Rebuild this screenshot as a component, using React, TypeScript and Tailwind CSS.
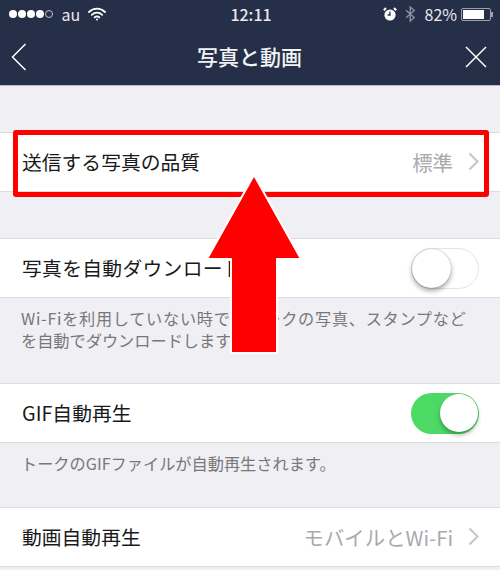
function Toggle({ on }: { on: boolean }) {
  if (on) {
    return (
      <div className="flex h-[41px] w-[68px] items-center justify-end rounded-full bg-[#4cd964] pr-[1px]">
        <div className="h-[38px] w-[38px] rounded-full bg-white shadow-[0_3px_4px_rgba(0,0,0,0.3)]" />
      </div>
    );
  }
  return (
    <div className="flex h-[41px] w-[68px] items-center rounded-full border border-[#e5e5e5] bg-white">
      <div className="h-[39px] w-[39px] rounded-full bg-white shadow-[0_3px_5px_rgba(0,0,0,0.35),0_0_1px_rgba(0,0,0,0.4)]" />
    </div>
  );
}

function Row({ label, value, toggle, labelClass = "" }: { label: string; value?: string; toggle?: boolean; labelClass?: string }) {
  return (
    <div className="flex h-[60px] items-center justify-between border-y border-[#dcdce0] bg-white pl-[22px] pr-[21px]">
      <span className={`text-[19.8px] text-[#1a1a1a] ${labelClass}`}>{label}</span>
      {toggle === undefined ? (
        <div className="flex items-center gap-[15px] text-[#a9a9ae]">
          <span className="text-[20.4px]">{value}</span>
          <svg width="11" height="19" viewBox="0 0 11 19" fill="none" stroke="#c7c7cc" strokeWidth="2.2">
            <path d="M1.5 1.5 L9.5 9.5 L1.5 17.5" />
          </svg>
        </div>
      ) : (
        <Toggle on={toggle} />
      )}
    </div>
  );
}

function StatusBar() {
  return (
    <div className="flex h-[28px] items-center justify-between pl-[9px] pr-[7px] text-[16px] text-[#e8eaf0]">
      <div className="flex w-[150px] items-center">
        <div className="flex items-center gap-[1.5px]">
          {[0, 1, 2, 3].map((i) => (
            <span key={i} className="h-[7.5px] w-[7.5px] rounded-full bg-white" />
          ))}
          <span className="h-[7.5px] w-[7.5px] rounded-full border border-white/70" />
        </div>
        <span className="ml-[9px]">au</span>
        <svg width="18" height="14" viewBox="0 0 18 14" className="ml-[8px]" fill="none" stroke="white" strokeLinecap="round">
          <path d="M1 5 C5.5 0.6 12.5 0.6 17 5" strokeWidth="1.8" />
          <path d="M3.8 7.8 C6.8 5 11.2 5 14.2 7.8" strokeWidth="1.8" />
          <path d="M6.6 10.4 C8 9.2 10 9.2 11.4 10.4" strokeWidth="1.8" />
          <circle cx="9" cy="12.4" r="1" fill="white" stroke="none" />
        </svg>
      </div>
      <span className="text-[16px] font-medium">12:11</span>
      <div className="flex w-[150px] items-center justify-end">
        <svg width="14" height="14" viewBox="0 0 14 14" className="mr-[8px]">
          <circle cx="7" cy="8" r="5.6" fill="white" />
          <path d="M7 4.6V8H4.6" stroke="#252f47" strokeWidth="1.3" fill="none" />
          <path d="M0.8 3.2 L3 1 M13.2 3.2 L11 1" stroke="white" strokeWidth="2" />
        </svg>
        <svg width="11" height="16" viewBox="0 0 11 16" fill="none" stroke="#8a90a0" strokeWidth="1.4" className="mr-[9px]">
          <path d="M1 4.2 L9.2 11.4 L5.2 15 V1 L9.2 4.6 L1 11.8" />
        </svg>
        <span>82%</span>
        <div className="ml-[4px] flex items-center">
          <div className="h-[13px] w-[30px] rounded-[2px] border border-[#9aa0ad] p-[1px]">
            <div className="h-full w-[82%] bg-white" />
          </div>
          <div className="h-[5px] w-[2px] bg-[#9aa0ad]" />
        </div>
      </div>
    </div>
  );
}

function NavBar() {
  return (
    <div className="flex h-[57px] items-center justify-between pl-[11px] pr-[13px]">
      <svg width="16" height="28" viewBox="0 0 16 28" fill="none" stroke="white" strokeWidth="1.5">
        <path d="M14.5 1 L1.5 14 L14.5 27" />
      </svg>
      <span className="ml-[7px] text-[21px] font-medium text-[#f2f3f6]">写真と動画</span>
      <svg width="22" height="22" viewBox="0 0 22 22" fill="none" stroke="white" strokeWidth="1.5">
        <path d="M1 1 L21 21 M21 1 L1 21" />
      </svg>
    </div>
  );
}

export default function App() {
  return (
    <div
      className="relative h-[570px] w-[500px] overflow-hidden bg-[#efeff4]"
      style={{ fontFamily: '"Noto Sans CJK JP", "Noto Sans", sans-serif' }}
    >
      <div className="border-b border-[#b9bccb] bg-[#252f47]">
        <StatusBar />
        <NavBar />
      </div>

      <div className="h-[46px]" />
      <Row label="送信する写真の品質" value="標準" />
      <div className="h-[46px]" />
      <Row label="写真を自動ダウンロード" toggle={false} labelClass="tracking-[0.3px]" />
      <p className="h-[85px] whitespace-nowrap px-[21px] pt-[9px] text-[16.2px] leading-[22px] text-[#77777c]">
        <span className="tracking-[0.7px]">Wi-Fiを利用していない時でもトークの写真、スタンプなど</span>
        <br />
        を自動でダウンロードします。
      </p>
      <Row label="GIF自動再生" toggle={true} />
      <p className="h-[64px] px-[21px] pt-[9px] text-[16.2px] leading-[22px] text-[#77777c]">
        トークのGIFファイルが自動再生されます。
      </p>
      <Row label="動画自動再生" value="モバイルとWi-Fi" />

      {/* annotation over the page */}
      <div className="absolute left-[13px] top-[130px] h-[67px] w-[476px] rounded-[3px] border-[5px] border-[#ff0000]" />
      <svg className="absolute left-[200px] top-[170px]" width="108" height="190" viewBox="0 0 108 190">
        <path
          d="M54 5 L101 89 L77 89 L77 183 L31 183 L31 89 L7 89 Z"
          fill="#ff0000"
          stroke="white"
          strokeWidth="2"
          strokeLinejoin="round"
        />
      </svg>
    </div>
  );
}
